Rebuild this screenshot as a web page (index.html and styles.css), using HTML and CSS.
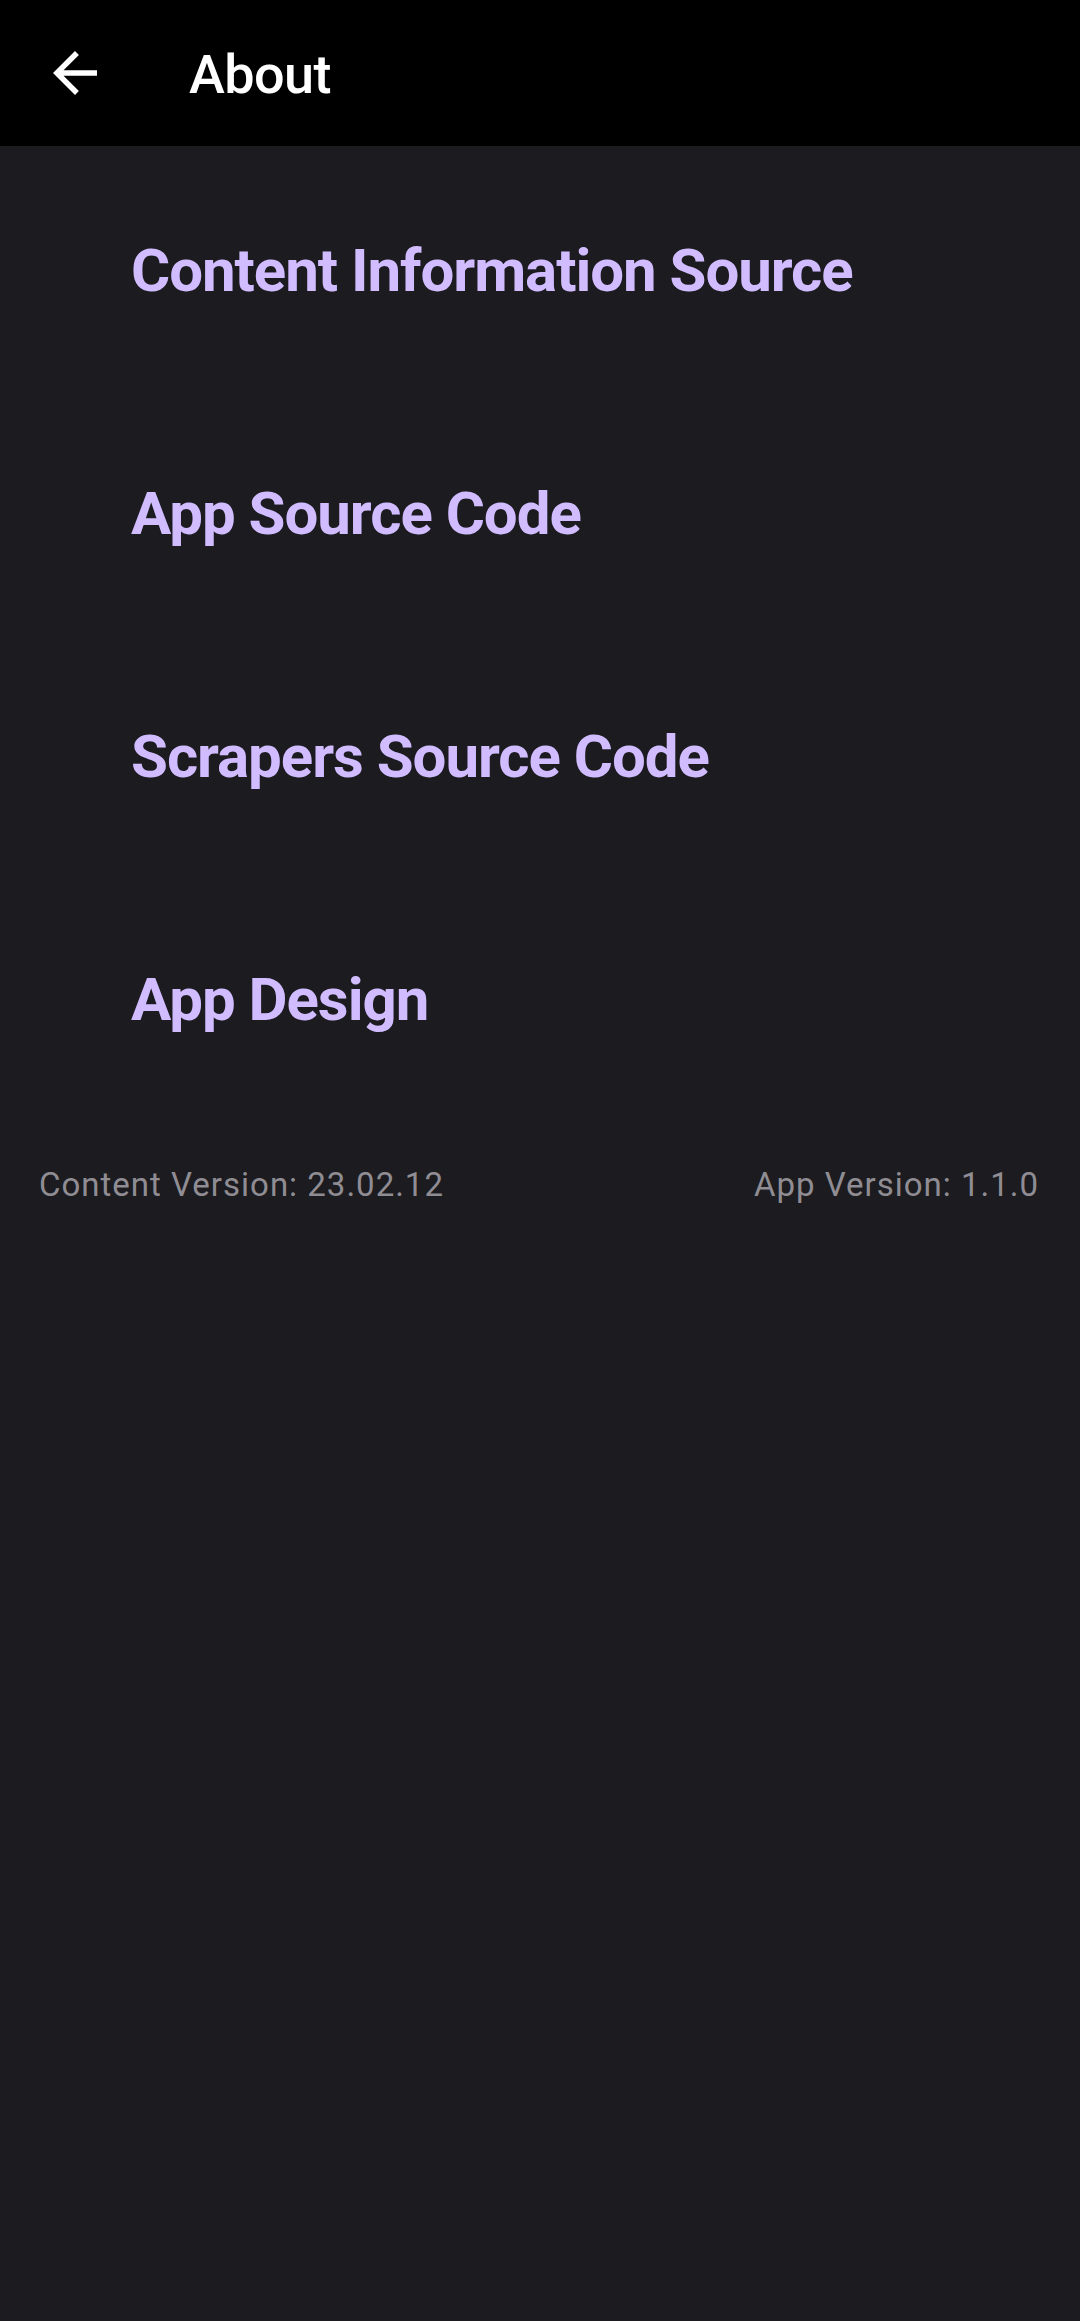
FILE: index.html
```html
<!DOCTYPE html>
<html lang="en">
<head>
<meta charset="utf-8">
<title>About</title>
<link rel="stylesheet" href="styles.css">
</head>
<body>
<div class="screen">
  <header class="topbar">
    <button class="back" aria-label="Back">
      <svg viewBox="0 0 24 24" width="66" height="66"><path fill="#ffffff" d="M20 11H7.83l5.59-5.59L12 4l-8 8 8 8 1.41-1.41L7.83 13H20v-2z"/></svg>
    </button>
    <h1 class="title">About</h1>
  </header>
  <main class="list">
    <a class="item">Content Information Source</a>
    <a class="item">App Source Code</a>
    <a class="item">Scrapers Source Code</a>
    <a class="item">App Design</a>
  </main>
  <footer class="versions">
    <span>Content Version: 23.02.12</span>
    <span>App Version: 1.1.0</span>
  </footer>
</div>
</body>
</html>
```
FILE: styles.css
```css
html, body {
  margin: 0;
  padding: 0;
  background: #1c1b1f;
}
body {
  font-family: Roboto, "Noto Sans", sans-serif;
  width: 1080px;
  height: 2321px;
  overflow: hidden;
}
.screen {
  display: flex;
  flex-direction: column;
  min-height: 2321px;
  background: #1c1b1f;
}
.topbar {
  height: 146px;
  background: #000000;
  display: flex;
  align-items: center;
  box-sizing: border-box;
}
.back {
  width: 66px;
  height: 66px;
  margin-left: 42px;
  margin-top: 0;
  padding: 0;
  border: 0;
  background: transparent;
  display: flex;
}
.title {
  margin: 0 0 0 81px;
  padding-top: 4px;
  color: #ffffff;
  font-size: 54px;
  font-weight: 500;
  line-height: 64px;
  letter-spacing: -0.6px;
}
.list {
  display: flex;
  flex-direction: column;
}
.item {
  display: block;
  height: 243px;
  box-sizing: border-box;
  padding: 90px 0 0 131px;
  color: #d0bcff;
  font-size: 60px;
  font-weight: 700;
  line-height: 70px;
  letter-spacing: -1.05px;
}
.versions {
  display: flex;
  justify-content: space-between;
  padding: 47px 41px 0 39px;
  color: #8f8d93;
  font-size: 33px;
  line-height: 39px;
  letter-spacing: 1px;
}
```
